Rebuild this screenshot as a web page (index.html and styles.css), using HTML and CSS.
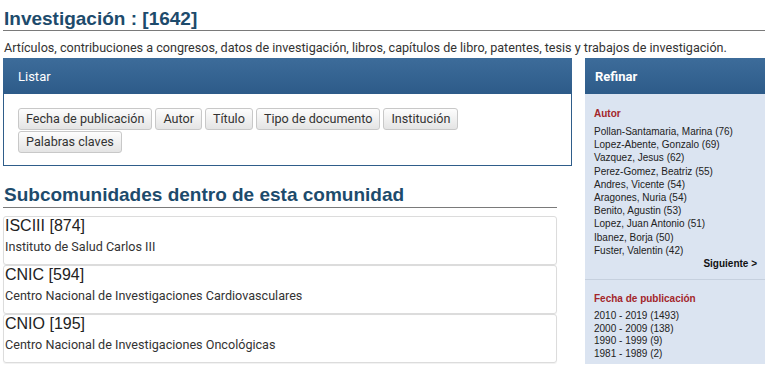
FILE: index.html
```html
<!DOCTYPE html>
<html lang="es">
<head>
<meta charset="utf-8">
<title>Investigación</title>
<link rel="stylesheet" href="styles.css">
</head>
<body>
<h1 class="page-title">Investigación : [1642]</h1>
<p class="intro">Artículos, contribuciones a congresos, datos de investigación, libros, capítulos de libro, patentes, tesis y trabajos de investigación.</p>
<div class="layout">
  <main class="main">
    <section class="panel">
      <div class="panel-head">Listar</div>
      <div class="panel-body">
        <a class="btn">Fecha de publicación</a>
        <a class="btn">Autor</a>
        <a class="btn">Título</a>
        <a class="btn">Tipo de documento</a>
        <a class="btn">Institución</a>
        <a class="btn">Palabras claves</a>
      </div>
    </section>
    <section class="subs">
      <h2 class="sub-title">Subcomunidades dentro de esta comunidad</h2>
      <ul class="sub-list">
        <li class="sub-item">
          <div class="sub-name">ISCIII [874]</div>
          <div class="sub-desc">Instituto de Salud Carlos III</div>
        </li>
        <li class="sub-item">
          <div class="sub-name">CNIC [594]</div>
          <div class="sub-desc">Centro Nacional de Investigaciones Cardiovasculares</div>
        </li>
        <li class="sub-item">
          <div class="sub-name">CNIO [195]</div>
          <div class="sub-desc">Centro Nacional de Investigaciones Oncológicas</div>
        </li>
      </ul>
    </section>
  </main>
  <aside class="side">
    <div class="side-head">Refinar</div>
    <div class="side-body">
      <div class="facet facet-first">
        <h4 class="facet-title">Autor</h4>
        <ul class="facet-list">
          <li>Pollan-Santamaria, Marina (76)</li>
          <li>Lopez-Abente, Gonzalo (69)</li>
          <li>Vazquez, Jesus (62)</li>
          <li>Perez-Gomez, Beatriz (55)</li>
          <li>Andres, Vicente (54)</li>
          <li>Aragones, Nuria (54)</li>
          <li>Benito, Agustin (53)</li>
          <li>Lopez, Juan Antonio (51)</li>
          <li>Ibanez, Borja (50)</li>
          <li>Fuster, Valentin (42)</li>
        </ul>
        <div class="facet-next">Siguiente &gt;</div>
      </div>
      <div class="facet">
        <h4 class="facet-title">Fecha de publicación</h4>
        <ul class="facet-list facet-dates">
          <li>2010 - 2019 (1493)</li>
          <li>2000 - 2009 (138)</li>
          <li>1990 - 1999 (9)</li>
          <li>1981 - 1989 (2)</li>
        </ul>
      </div>
    </div>
  </aside>
</div>
</body>
</html>
```
FILE: styles.css
```css
html, body {
  margin: 0;
  padding: 0;
  background: #fff;
}
body {
  font-family: Roboto, "Liberation Sans", sans-serif;
  color: #333;
  overflow: hidden;
}
.page-title {
  margin: 0 0 0 3px;
  padding: 8px 0 0 1px;
  font-family: "Liberation Sans", Arial, sans-serif;
  font-size: 19px;
  line-height: 22px;
  font-weight: bold;
  color: #1d4b6c;
  border-bottom: 1px solid #7a7a7a;
}
.intro {
  margin: 9px 0 2px 4px;
  font-size: 12.6px;
  line-height: 16px;
  color: #333;
}
.layout {
  display: flex;
  gap: 13px;
  padding-left: 3px;
}
.main {
  width: 569px;
  flex: none;
}
.panel-head, .side-head {
  height: 36px;
  line-height: 36px;
  padding-top: 1px;
  box-sizing: border-box;
  background: linear-gradient(#3d6c9a, #2d5b89);
  color: #fff;
  font-size: 13px;
}
.panel-head {
  padding-left: 15px;
}
.panel-body {
  border: 1px solid #2f5d8a;
  border-top: none;
  padding: 14px 14px 12px;
  display: flex;
  flex-wrap: wrap;
  gap: 1px 3px;
}
.btn {
  display: block;
  height: 22px;
  line-height: 20px;
  padding: 0 7px;
  box-sizing: border-box;
  border: 1px solid #c8c8c8;
  border-radius: 3px;
  background: linear-gradient(#fdfdfd, #e4e4e4);
  font-size: 12.6px;
  color: #333;
}
.subs {
  margin-right: 15px;
}
.sub-title {
  margin: 18px 0 0;
  padding: 0 0 1px 1px;
  font-family: "Liberation Sans", Arial, sans-serif;
  font-size: 19px;
  line-height: 22px;
  font-weight: bold;
  color: #1d4b6c;
  border-bottom: 1px solid #7a7a7a;
}
.sub-list {
  list-style: none;
  margin: 8px 0 0;
  padding: 0;
}
.sub-item {
  border: 1px solid #dcdcdc;
  border-radius: 3px;
  padding: 0 0 9px 1px;
  box-shadow: 0 1px 1px rgba(0,0,0,0.06);
}
.sub-name {
  font-family: "Liberation Sans", Arial, sans-serif;
  font-size: 16px;
  line-height: 18px;
  color: #222;
}
.sub-desc {
  margin-top: 4px;
  font-size: 12.6px;
  line-height: 16px;
  color: #333;
}
.side {
  width: 180px;
  flex: none;
}
.side-head {
  padding-left: 10px;
  font-weight: bold;
}
.side-body {
  background: #dbe4f1;
  padding: 0 8px 3px 9px;
}
.facet {
  padding-top: 12px;
}
.facet-first {
  padding-top: 13px;
  padding-bottom: 9px;
  border-bottom: 1px solid #c6d0de;
  margin: 0 -8px 0 -9px;
  padding-left: 9px;
  padding-right: 8px;
}
.facet-title {
  margin: 0 0 5px;
  font-family: "Liberation Sans", Arial, sans-serif;
  font-size: 10px;
  line-height: 13px;
  font-weight: bold;
  color: #a3262b;
}
.facet-list {
  list-style: none;
  margin: 0;
  padding: 0;
  font-family: "Liberation Sans", Arial, sans-serif;
  font-size: 10px;
  line-height: 13.2px;
  color: #222;
}
.facet-dates {
  line-height: 12.7px;
}
.facet-next {
  text-align: right;
  font-family: "Liberation Sans", Arial, sans-serif;
  font-size: 10px;
  line-height: 13px;
  font-weight: bold;
  color: #111;
}
```
